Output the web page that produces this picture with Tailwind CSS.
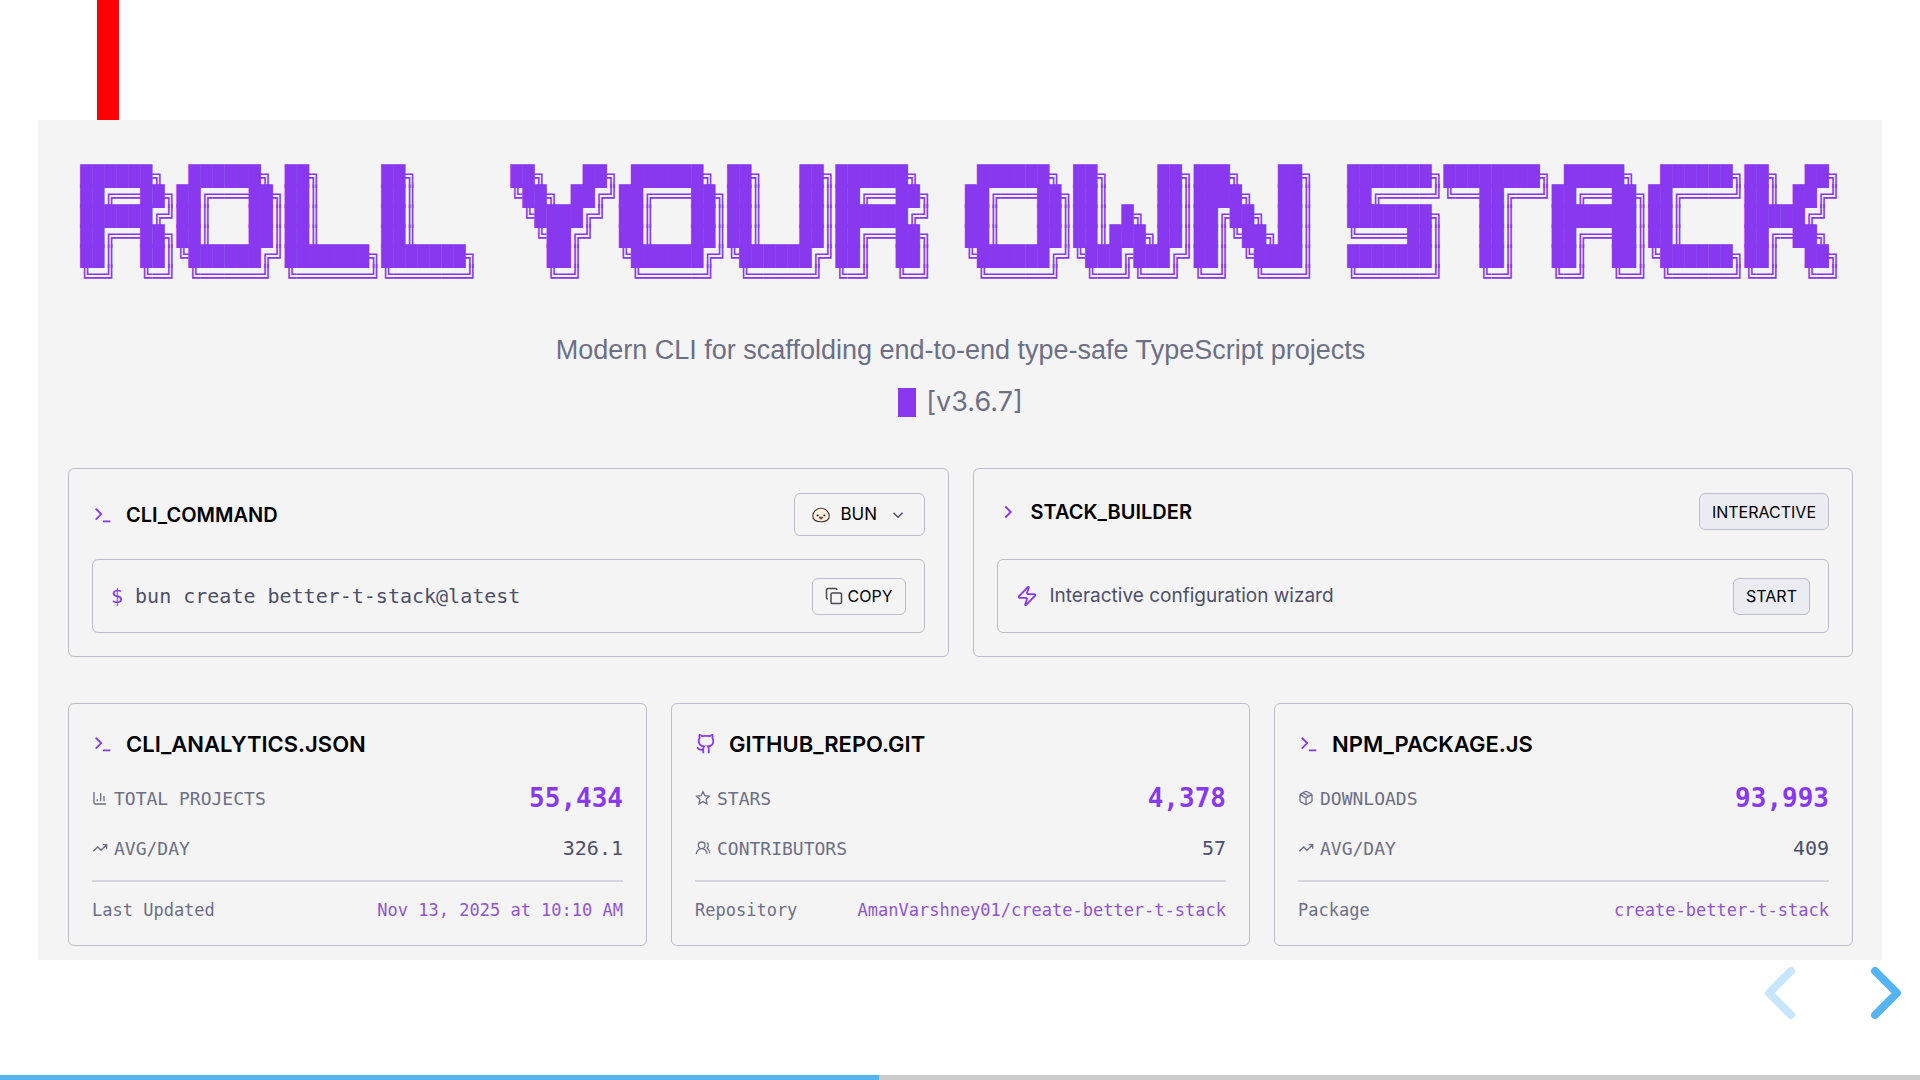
<!DOCTYPE html>
<html lang="en">

<head>
    <meta charset="UTF-8">
    <meta name="viewport" content="width=device-width, initial-scale=1.0">
    <title>Better-T-Stack</title>
    <script src="https://cdn.jsdelivr.net/npm/@tailwindcss/browser@4"></script>
    <style>
        body {
            font-family: 'Inter', 'Liberation Sans', sans-serif;
        }
        code, pre, .mono {
            font-family: 'DejaVu Sans Mono', monospace;
        }
        .tagline {
            font-family: 'Liberation Sans', sans-serif;
        }
    </style>
</head>

<body class="bg-white min-h-screen flex flex-col">

<!-- Icons -->
<svg class="hidden" fill="none" stroke="currentColor">
    <symbol id="terminal" viewBox="0 0 24 24"><path d="m4 17 6-6-6-6M12 19h8"/></symbol>
    <symbol id="chevron-right" viewBox="0 0 24 24"><path d="m9 18 6-6-6-6"/></symbol>
    <symbol id="chevron-down" viewBox="0 0 24 24"><path d="m6 9 6 6 6-6"/></symbol>
    <symbol id="copy" viewBox="0 0 24 24"><rect width="14" height="14" x="8" y="8" rx="2"/><path d="M4 16c-1.100 0-2-.9-2-2V4c0-1.100.9-2 2-2h10c1.100 0 2 .9 2 2"/></symbol>
    <symbol id="zap" viewBox="0 0 24 24"><path d="M4 14a1 1 0 0 1-.78-1.630l9.900-10.200a.5.5 0 0 1 .86.46l-1.920 6.020A1 1 0 0 0 13 10h7a1 1 0 0 1 .78 1.630l-9.900 10.200a.5.5 0 0 1-.86-.46l1.920-6.020A1 1 0 0 0 11 14z"/></symbol>
    <symbol id="chart" viewBox="0 0 24 24"><path d="M3 3v16a2 2 0 0 0 2 2h16M18 17V9M13 17V5M8 17v-3"/></symbol>
    <symbol id="trending" viewBox="0 0 24 24"><path d="M16 7h6v6M22 7l-8.500 8.500-5-5L2 17"/></symbol>
    <symbol id="github" viewBox="0 0 24 24"><path d="M15 22v-4a4.800 4.800 0 0 0-1-3.500c3 0 6-2 6-5.500.08-1.250-.27-2.480-1-3.500.28-1.150.28-2.350 0-3.500 0 0-1 0-3 1.500-2.640-.5-5.360-.5-8 0C6 2 5 2 5 2c-.3 1.150-.3 2.350 0 3.500A5.403 5.403 0 0 0 4 9c0 3.500 3 5.500 6 5.500-.39.490-.68 1.050-.85 1.650-.17.6-.22 1.230-.15 1.850v4M9 18c-4.510 2-5-2-7-2"/></symbol>
    <symbol id="star" viewBox="0 0 24 24"><path d="M12 2.500l2.900 6 6.600.9-4.800 4.600 1.200 6.600L12 17.400l-5.900 3.200 1.200-6.600L2.500 9.400l6.600-.9z"/></symbol>
    <symbol id="users" viewBox="0 0 24 24"><path d="M18 21a8 8 0 0 0-16 0M22 20c0-3.370-2-6.500-4-8a5 5 0 0 0-.45-8.300"/><circle cx="10" cy="8" r="5"/></symbol>
    <symbol id="package" viewBox="0 0 24 24"><path d="M11 21.730a2 2 0 0 0 2 0l7-4A2 2 0 0 0 21 16V8a2 2 0 0 0-1-1.730l-7-4a2 2 0 0 0-2 0l-7 4A2 2 0 0 0 3 8v8a2 2 0 0 0 1 1.730zM12 22V12M3.290 7 12 12l8.710-5M7.500 4.270l9 5.150"/></symbol>
</svg>

<header class="h-[120px] pl-[97px]">
    <div class="w-[22px] h-full bg-[#ff0000]"></div>
</header>

<main class="mx-[38px] pl-[30px] pr-[29px] pt-[46px] pb-[14px] bg-[#f4f4f5]">

    <!-- Banner -->
    <h1 class="flex justify-center gap-[33px] text-[20px] leading-[20px] text-[#8839ef]" aria-label="Roll your own stack">
<pre>
██████╗  ██████╗ ██╗     ██╗     
██╔══██╗██╔═══██╗██║     ██║     
██████╔╝██║   ██║██║     ██║     
██╔══██╗██║   ██║██║     ██║     
██║  ██║╚██████╔╝███████╗███████╗
╚═╝  ╚═╝ ╚═════╝ ╚══════╝╚══════╝</pre>
<pre>
██╗   ██╗ ██████╗ ██╗   ██╗██████╗ 
╚██╗ ██╔╝██╔═══██╗██║   ██║██╔══██╗
 ╚████╔╝ ██║   ██║██║   ██║██████╔╝
  ╚██╔╝  ██║   ██║██║   ██║██╔══██╗
   ██║   ╚██████╔╝╚██████╔╝██║  ██║
   ╚═╝    ╚═════╝  ╚═════╝ ╚═╝  ╚═╝</pre>
<pre>
 ██████╗ ██╗    ██╗███╗   ██╗
██╔═══██╗██║    ██║████╗  ██║
██║   ██║██║ █╗ ██║██╔██╗ ██║
██║   ██║██║███╗██║██║╚██╗██║
╚██████╔╝╚███╔███╔╝██║ ╚████║
 ╚═════╝  ╚══╝╚══╝ ╚═╝  ╚═══╝</pre>
<pre>
███████╗████████╗ █████╗  ██████╗██╗  ██╗
██╔════╝╚══██╔══╝██╔══██╗██╔════╝██║ ██╔╝
███████╗   ██║   ███████║██║     █████╔╝ 
╚════██║   ██║   ██╔══██║██║     ██╔═██╗ 
███████║   ██║   ██║  ██║╚██████╗██║  ██╗
╚══════╝   ╚═╝   ╚═╝  ╚═╝ ╚═════╝╚═╝  ╚═╝</pre>
    </h1>

    <p class="tagline mt-[46px] text-center text-[27px] leading-[36px] text-[#6c6f85]">Modern CLI for scaffolding end-to-end type-safe TypeScript projects</p>
    <div class="mt-4 mb-12 flex items-center justify-center gap-[10px] text-[27px] leading-[36px] text-[#6c6f85]">
        <span class="w-[18px] h-[29px] bg-[#8839ef]"></span>
        <span>[v3.6.7]</span>
    </div>

    <!-- Commands -->
    <div class="grid grid-cols-2 gap-6">
        <section class="border border-[#bcbccc] rounded-md px-[23px] pt-6 pb-[23px] flex flex-col justify-between gap-[23px]">
            <div class="flex items-center justify-between">
                <h2 class="flex items-center gap-3 text-[20px] font-semibold text-black">
                    <svg class="size-[22px] text-[#8839ef]" fill="none" stroke="currentColor" stroke-width="2"><use href="#terminal"/></svg>
                    CLI_COMMAND
                </h2>
                <div class="h-[43px] px-[17px] flex items-center gap-[11px] border border-[#bcbccc] rounded-md text-[17px]">
                    <svg class="size-[18px]" viewBox="0 0 24 24" stroke="#4a3a30">
                        <path d="M12 3C6 3 1 8 1 13s4 8 11 8 11-3 11-8-5-10-11-10z" fill="#fbf0df" stroke-width="1.500"/>
                        <path d="M9.500 15c1 3 4 3 5 0z" fill="#b71422" stroke-width="1"/>
                        <circle cx="7.500" cy="12.500" r="1.300" fill="#000" stroke="none"/>
                        <circle cx="16.500" cy="12.500" r="1.300" fill="#000" stroke="none"/>
                    </svg>
                    <select aria-label="Package manager" class="appearance-none bg-transparent text-black">
                        <option>BUN</option>
                    </select>
                    <svg class="size-[18px] text-[#4c4f69]" fill="none" stroke="currentColor" stroke-width="2"><use href="#chevron-down"/></svg>
                </div>
            </div>
            <div class="h-[74px] px-[18px] flex items-center gap-3 border border-[#bcbccc] rounded-md">
                <code class="text-[20px] text-[#8839ef]">$</code>
                <code class="text-[20px] text-[#4c4f69]">bun create better-t-stack@latest</code>
                <button class="ml-auto h-[37px] px-3 flex items-center gap-[5px] border border-[#bcbccc] rounded-md text-[16px] text-black">
                    <svg class="size-[18px] text-[#4a4a50]" fill="none" stroke="currentColor" stroke-width="2"><use href="#copy"/></svg>
                    COPY
                </button>
            </div>
        </section>

        <section class="border border-[#bcbccc] rounded-md px-[23px] pt-6 pb-[23px] flex flex-col justify-between gap-[23px]">
            <div class="flex items-center justify-between">
                <h2 class="flex items-center gap-3 text-[20px] font-semibold text-black">
                    <svg class="size-[22px] text-[#8839ef]" fill="none" stroke="currentColor" stroke-width="2"><use href="#chevron-right"/></svg>
                    STACK_BUILDER
                </h2>
                <span class="h-[37px] px-3 flex items-center border border-[#bcbccc] rounded-md bg-[#ebecf1] text-[16px] text-black">INTERACTIVE</span>
            </div>
            <div class="h-[74px] px-[18px] flex items-center gap-3 border border-[#bcbccc] rounded-md">
                <svg class="size-[22px] text-[#8839ef]" fill="none" stroke="currentColor" stroke-width="2"><use href="#zap"/></svg>
                <span class="text-[19px] text-[#4c4f69]">Interactive configuration wizard</span>
                <button class="ml-auto h-[37px] px-3 border border-[#bcbccc] rounded-md bg-[#ebecf1] text-[16px] text-black">START</button>
            </div>
        </section>
    </div>

    <!-- Stats -->
    <div class="mt-[46px] grid grid-cols-3 gap-6">
        <section class="border border-[#bcbccc] rounded-md p-[23px]">
            <h2 class="flex items-center gap-3 text-[22px] leading-[34px] font-semibold text-black">
                <svg class="size-[22px] text-[#8839ef]" fill="none" stroke="currentColor" stroke-width="2"><use href="#terminal"/></svg>
                CLI_ANALYTICS.JSON
            </h2>
            <div class="mono mt-[19px] flex items-center justify-between">
                <span class="flex items-center gap-[6px] text-[18px] text-[#6c6f85]">
                    <svg class="size-[16px]" fill="none" stroke="currentColor" stroke-width="2"><use href="#chart"/></svg>
                    TOTAL PROJECTS
                </span>
                <span class="text-[26px] leading-[36px] font-bold text-[#8839ef]">55,434</span>
            </div>
            <div class="mono mt-[18px] flex items-center justify-between">
                <span class="flex items-center gap-[6px] text-[18px] text-[#6c6f85]">
                    <svg class="size-[16px]" fill="none" stroke="currentColor" stroke-width="2"><use href="#trending"/></svg>
                    AVG/DAY
                </span>
                <span class="text-[20px] leading-[28px] text-[#4c4f69]">326.1</span>
            </div>
            <div class="mono mt-[18px] pt-4 flex items-center justify-between border-t-2 border-[#d6d6da] text-[17px] leading-[24px]">
                <span class="text-[#6c6f85]">Last Updated</span>
                <span class="text-[#8f55d0]">Nov 13, 2025 at 10:10 AM</span>
            </div>
        </section>

        <section class="border border-[#bcbccc] rounded-md p-[23px]">
            <h2 class="flex items-center gap-3 text-[22px] leading-[34px] font-semibold text-black">
                <svg class="size-[22px] text-[#8839ef]" fill="none" stroke="currentColor" stroke-width="2"><use href="#github"/></svg>
                GITHUB_REPO.GIT
            </h2>
            <div class="mono mt-[19px] flex items-center justify-between">
                <span class="flex items-center gap-[6px] text-[18px] text-[#6c6f85]">
                    <svg class="size-[16px]" fill="none" stroke="currentColor" stroke-width="2"><use href="#star"/></svg>
                    STARS
                </span>
                <span class="text-[26px] leading-[36px] font-bold text-[#8839ef]">4,378</span>
            </div>
            <div class="mono mt-[18px] flex items-center justify-between">
                <span class="flex items-center gap-[6px] text-[18px] text-[#6c6f85]">
                    <svg class="size-[16px]" fill="none" stroke="currentColor" stroke-width="2"><use href="#users"/></svg>
                    CONTRIBUTORS
                </span>
                <span class="text-[20px] leading-[28px] text-[#4c4f69]">57</span>
            </div>
            <div class="mono mt-[18px] pt-4 flex items-center justify-between border-t-2 border-[#d6d6da] text-[17px] leading-[24px]">
                <span class="text-[#6c6f85]">Repository</span>
                <a href="#" class="text-[#8f55d0]">AmanVarshney01/create-better-t-stack</a>
            </div>
        </section>

        <section class="border border-[#bcbccc] rounded-md p-[23px]">
            <h2 class="flex items-center gap-3 text-[22px] leading-[34px] font-semibold text-black">
                <svg class="size-[22px] text-[#8839ef]" fill="none" stroke="currentColor" stroke-width="2"><use href="#terminal"/></svg>
                NPM_PACKAGE.JS
            </h2>
            <div class="mono mt-[19px] flex items-center justify-between">
                <span class="flex items-center gap-[6px] text-[18px] text-[#6c6f85]">
                    <svg class="size-[16px]" fill="none" stroke="currentColor" stroke-width="2"><use href="#package"/></svg>
                    DOWNLOADS
                </span>
                <span class="text-[26px] leading-[36px] font-bold text-[#8839ef]">93,993</span>
            </div>
            <div class="mono mt-[18px] flex items-center justify-between">
                <span class="flex items-center gap-[6px] text-[18px] text-[#6c6f85]">
                    <svg class="size-[16px]" fill="none" stroke="currentColor" stroke-width="2"><use href="#trending"/></svg>
                    AVG/DAY
                </span>
                <span class="text-[20px] leading-[28px] text-[#4c4f69]">409</span>
            </div>
            <div class="mono mt-[18px] pt-4 flex items-center justify-between border-t-2 border-[#d6d6da] text-[17px] leading-[24px]">
                <span class="text-[#6c6f85]">Package</span>
                <a href="#" class="text-[#8f55d0]">create-better-t-stack</a>
            </div>
        </section>
    </div>
</main>

<!-- Slide controls -->
<nav class="mt-[6px] pr-[18px] flex justify-end gap-[74px]">
    <button aria-label="Previous slide">
        <svg class="w-8 h-[54px]" viewBox="0 0 32 54" fill="none" stroke="#c6e7fd" stroke-width="8" stroke-linecap="round" stroke-linejoin="round"><path d="M27 5 5 27l22 22"/></svg>
    </button>
    <button aria-label="Next slide">
        <svg class="w-8 h-[54px]" viewBox="0 0 32 54" fill="none" stroke="#54b4f5" stroke-width="8" stroke-linecap="round" stroke-linejoin="round"><path d="M5 5l22 22L5 49"/></svg>
    </button>
</nav>

<div class="mt-auto h-[5px] bg-[#cccccc]">
    <div class="h-full bg-[#54b4f5]" style="width: 45.800%"></div>
</div>

</body>
</html>
